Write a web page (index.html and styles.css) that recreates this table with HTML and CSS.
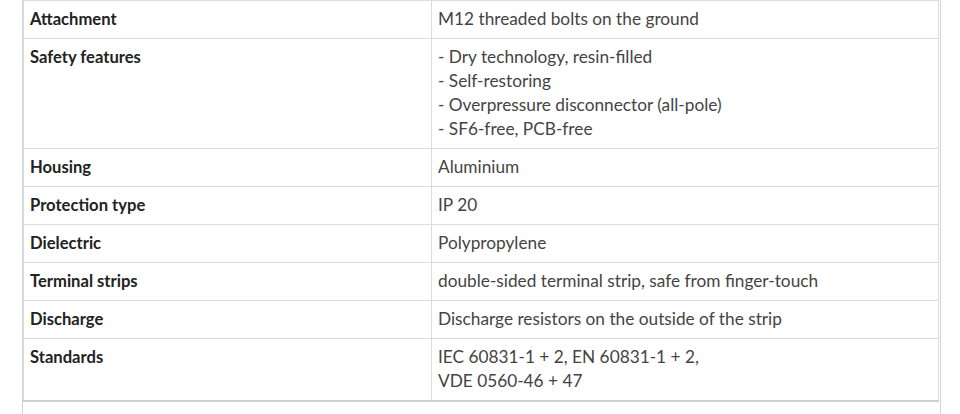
FILE: index.html
```html
<!DOCTYPE html>
<html lang="en">
<head>
<meta charset="utf-8">
<title>Specifications</title>
<link rel="stylesheet" href="styles.css">
</head>
<body>
<div class="panel">
  <table class="specs">
    <tbody>
      <tr><th>Attachment</th><td>M12 threaded bolts on the ground</td></tr>
      <tr><th>Safety features</th><td>- Dry technology, resin-filled<br>- Self-restoring<br>- Overpressure disconnector (all-pole)<br>- SF6-free, PCB-free</td></tr>
      <tr><th>Housing</th><td>Aluminium</td></tr>
      <tr><th>Protection type</th><td>IP 20</td></tr>
      <tr><th>Dielectric</th><td>Polypropylene</td></tr>
      <tr><th>Terminal strips</th><td>double-sided terminal strip, safe from finger-touch</td></tr>
      <tr><th>Discharge</th><td>Discharge resistors on the outside of the strip</td></tr>
      <tr><th>Standards</th><td>IEC 60831-1 + 2, EN 60831-1 + 2,<br>VDE 0560-46 + 47</td></tr>
    </tbody>
  </table>
</div>
</body>
</html>
```
FILE: styles.css
```css
html, body {
  margin: 0;
  padding: 0;
  background: #fff;
}
body {
  font-family: Lato, "Liberation Sans", sans-serif;
  font-size: 17.25px;
  line-height: 24px;
}
.panel {
  margin-left: 22px;
  width: 917px;
  height: 414px;
  border-left: 1px solid #d4d4d4;
  border-right: 1px solid #d4d4d4;
}
.specs {
  width: 916px;
  border-collapse: collapse;
  border-bottom: 2px solid #cfcfcf;
}
.specs th,
.specs td {
  text-align: left;
  vertical-align: top;
  padding: 6px 7px 7px 6px;
  border: 1px solid #dcdcdc;
}
.specs th {
  width: 394px;
  font-size: 16.6px;
  font-weight: bold;
  color: #222;
}
.specs td {
  color: #444;
}
.specs tr:last-child th,
.specs tr:last-child td {
  border-bottom: 2px solid #cfcfcf;
}
```
